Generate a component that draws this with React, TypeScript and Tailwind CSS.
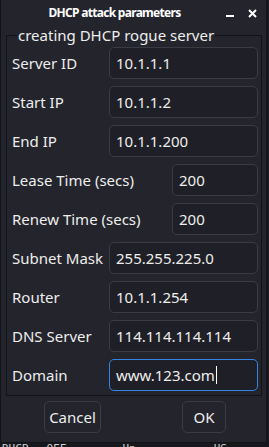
import { useState } from "react";

const FONT = { fontFamily: '"Noto Sans", "Open Sans", sans-serif' };

const FIELDS = [
  { label: "Server ID", value: "10.1.1.1", short: false },
  { label: "Start IP", value: "10.1.1.2", short: false },
  { label: "End IP", value: "10.1.1.200", short: false },
  { label: "Lease Time (secs)", value: "200", short: true },
  { label: "Renew Time (secs)", value: "200", short: true },
  { label: "Subnet Mask", value: "255.255.225.0", short: false },
  { label: "Router", value: "10.1.1.254", short: false },
  { label: "DNS Server", value: "114.114.114.114", short: false },
];

function Field({ label, value, short }: { label: string; value: string; short: boolean }) {
  return (
    <div className="flex h-[32px] items-center justify-between">
      <span className="text-[15px] leading-5 text-[#eeeeec]">{label}</span>
      <div
        className={`flex h-[32px] items-center rounded-[5px] border border-[#3a3b43] bg-[#1f2027] pl-[6px] text-[15px] text-[#eeeeec] ${
          short ? "w-[86px]" : "w-[149px]"
        }`}
      >
        {value}
      </div>
    </div>
  );
}

export default function App() {
  const [domain] = useState("www.123.com");

  return (
    <div className="flex h-[447px] w-[269px] flex-col overflow-hidden bg-[#17181d]" style={FONT}>
      <div className="flex h-[443px] w-[267px] flex-col border-x border-b border-[#121317] bg-[#23242c]">
        {/* title bar */}
        <div className="flex h-[26px] shrink-0 items-center">
          <div className="flex-1 pl-[2px] text-center text-[12px] font-bold tracking-[-0.7px] text-white">
            DHCP attack parameters
          </div>
          <div className="flex items-center gap-[14px] pr-[8px]">
            <span className="mt-[5px] block h-[2px] w-[8px] bg-white" />
            <svg width="9" height="9" viewBox="0 0 9 9" className="mr-[1px]">
              <path d="M1 1 L8 8 M8 1 L1 8" stroke="white" strokeWidth="2" />
            </svg>
          </div>
        </div>

        {/* group box */}
        <fieldset className="ml-[5px] mr-[4px] mt-[-1px] border border-[#111216] pb-[4px] pl-[5px] pr-[3px]">
          <legend className="ml-[5px] px-[1px] text-[15px] leading-5 text-[#eeeeec]">
            creating DHCP rogue server
          </legend>
          <div className="mt-[2px] flex flex-col gap-[7px]">
            {FIELDS.map((f) => (
              <Field key={f.label} {...f} />
            ))}
            <div className="flex h-[32px] items-center justify-between">
              <span className="text-[15px] leading-5 text-[#eeeeec]">Domain</span>
              <div className="flex h-[32px] w-[149px] items-center rounded-[5px] border-[1.5px] border-[#3584e4] bg-[#1f2027] pl-[6px] text-[15px] text-[#eeeeec]">
                {domain}
                <span className="ml-[1px] block h-[18px] w-[1px] bg-white" />
              </div>
            </div>
          </div>
        </fieldset>

        {/* buttons */}
        <div className="mt-[5px] flex gap-[81px] pl-[43px]">
          <button
            type="button"
            className="flex h-[32px] w-[57px] items-center justify-center rounded-[5px] border border-[#3a3b43] bg-[#23242c] text-[15px] text-[#eeeeec]"
          >
            Cancel
          </button>
          <button
            type="button"
            className="flex h-[32px] w-[44px] items-center justify-center rounded-[5px] border border-[#3a3b43] bg-[#23242c] text-[15px] text-[#eeeeec]"
          >
            OK
          </button>
        </div>
      </div>

      {/* terminal behind the window */}
      <div className="h-[4px] overflow-hidden">
        <div className="flex gap-[18px] whitespace-nowrap pl-[2px] text-[11px] leading-[11px] text-[#d0d0d0] [font-family:'DejaVu_Sans_Mono',monospace]">
          <span>DHCP</span>
          <span>OFF</span>
          <span className="ml-[38px]">Up</span>
          <span className="ml-[60px]">US</span>
        </div>
      </div>
    </div>
  );
}
